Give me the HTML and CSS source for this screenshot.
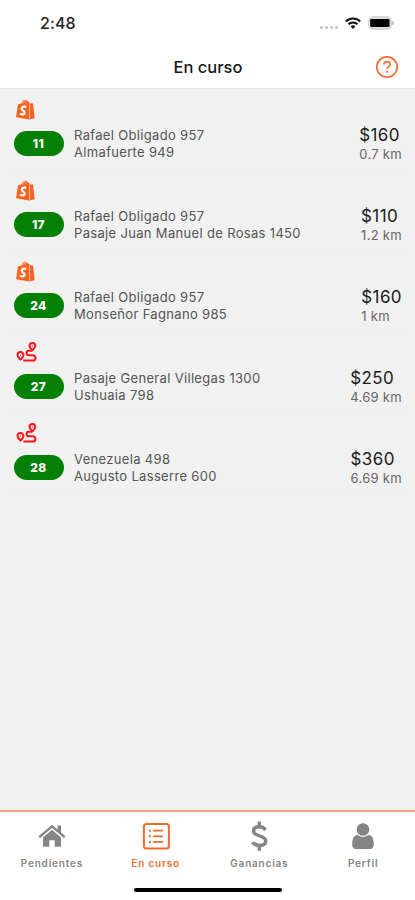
FILE: index.html
```html
<!DOCTYPE html>
<html lang="es">
<head>
<meta charset="utf-8">
<title>En curso</title>
<link rel="stylesheet" href="styles.css">
</head>
<body>
<svg class="defs" width="0" height="0" aria-hidden="true">
  <symbol id="bag" viewBox="0 0 18 20">
    <path fill="#f9621f" d="M1.8 5.3 5 4.4C5.6 2.200 7 .7 8.700.6c.6 0 1 .3 1.300.8.9 0 1.500.7 1.900 1.500l.6-.1V19.600L0 17.400z"/>
    <path fill="#f9621f" d="M12.400 2.800l1.800 1.400 2 .2L17.700 18.300l-5.300 1.300z"/>
    <path fill="none" stroke="#f4f0ed" stroke-width=".6" d="M6.200 4.300c.5-1.500 1.300-2.500 2.400-2.700M9.200 3.500c0-.8-.1-1.300-.5-1.900M12.900 3.500v15.500"/>
    <path fill="none" stroke="#fff" stroke-width="2.100" d="M9.600 7.700C7.700 6.900 5.500 7.500 5.400 9.200c-.1 1.700 3 2 2.800 4-.2 1.800-2.600 1.900-4.500.7"/>
  </symbol>
  <symbol id="route" viewBox="0 0 20 20">
    <g fill="none" stroke="#f8151b" stroke-width="2" stroke-linejoin="round">
      <path d="M15.900 8.400c-1.500-1.800-2.900-3-2.900-4.500a2.900 2.900 0 0 1 5.800 0c0 1.500-1.400 2.700-2.900 4.500z"/>
      <path d="M4 17.600c-1.600-1.800-3-3-3-4.500a3 3 0 0 1 6 0c0 1.500-1.400 2.700-3 4.500z"/>
      <path d="M15.500 8.800h-3.200a2.200 2.200 0 0 0 0 4.400h4a2.700 2.700 0 0 1 0 5.400H6.800"/>
    </g>
    <circle cx="15.900" cy="3.900" r=".7" fill="#f8151b"/><circle cx="4" cy="13.100" r=".7" fill="#f8151b"/>
  </symbol>
</svg>
<div class="screen">
  <header class="header">
    <div class="status">
      <span class="time">2:48</span>
      <div class="indicators">
        <span class="dots"><i></i><i></i><i></i><i></i></span>
        <svg class="wifi" width="16" height="12" viewBox="0 0 16 12"><g fill="none" stroke="#111" stroke-width="2.100"><path d="M.8 4.400a10.400 10.400 0 0 1 14.400 0"/><path d="M3.500 7.300a6.500 6.500 0 0 1 9 0"/></g><path fill="#111" d="M5.700 9.400a3.300 3.300 0 0 1 4.600 0L8 11.900z"/></svg>
        <svg class="battery" width="27" height="14" viewBox="0 0 27 14"><rect x=".8" y=".8" width="22.400" height="12.400" rx="3.500" fill="#dedede" stroke="#cacaca"/><rect x="2.200" y="3" width="19.300" height="8" rx="1.200" fill="#000"/><path d="M24.300 4.500q3 2.500 0 5z" fill="#aaa"/></svg>
      </div>
    </div>
    <div class="titlebar">
      <h1>En curso</h1>
      <svg class="help" width="24" height="24" viewBox="0 0 24 24" fill="none" stroke="#f96b32"><circle cx="12" cy="12" r="10.200" stroke-width="1.700"/><path stroke-width="1.600" d="M8.900 9.500C9 7.500 10.300 6.600 12 6.600s3.200 1 3.200 2.700c0 2.200-3.100 2.400-3.100 5"/><circle cx="12.100" cy="16.800" r="1.100" fill="#f96b32" stroke="none"/></svg>
    </div>
  </header>
  <main class="list">
    <article class="order">
      <svg class="kind bag"><use href="#bag"/></svg>
      <div class="row"><span class="badge">11</span><p class="address">Rafael Obligado 957<br>Almafuerte 949</p><div class="amount"><b>$160</b><span>0.7 km</span></div></div>
    </article>
    <article class="order">
      <svg class="kind bag"><use href="#bag"/></svg>
      <div class="row"><span class="badge">17</span><p class="address">Rafael Obligado 957<br>Pasaje Juan Manuel de Rosas 1450</p><div class="amount"><b>$110</b><span>1.2 km</span></div></div>
    </article>
    <article class="order">
      <svg class="kind bag"><use href="#bag"/></svg>
      <div class="row"><span class="badge">24</span><p class="address">Rafael Obligado 957<br>Monseñor Fagnano 985</p><div class="amount"><b>$160</b><span>1 km</span></div></div>
    </article>
    <article class="order">
      <svg class="kind route"><use href="#route"/></svg>
      <div class="row"><span class="badge">27</span><p class="address">Pasaje General Villegas 1300<br>Ushuaia 798</p><div class="amount"><b>$250</b><span>4.69 km</span></div></div>
    </article>
    <article class="order">
      <svg class="kind route"><use href="#route"/></svg>
      <div class="row"><span class="badge">28</span><p class="address">Venezuela 498<br>Augusto Lasserre 600</p><div class="amount"><b>$360</b><span>6.69 km</span></div></div>
    </article>
  </main>
  <footer class="footer">
    <nav class="tabs">
      <a class="tab"><svg width="28" height="32" viewBox="0 0 28 32"><path fill="#858585" d="M14 9.800 23 17.500v9.200h-6.300v-6.500h-5.400v6.500H5v-9.200z"/><path fill="none" stroke="#858585" stroke-width="2.300" d="M1.300 17.200 14 6.300l12.700 10.900"/><path fill="#858585" d="M19.500 5.500H23v8l-3.500-3z"/></svg><span>Pendientes</span></a>
      <a class="tab active"><svg width="28" height="32" viewBox="0 0 28 32"><rect x="1.900" y="4" width="25" height="24.600" rx="2.500" fill="none" stroke="#ee6b2c" stroke-width="2"/><g stroke="#ee6b2c" stroke-width="1.700"><path d="M11 10.700h10M11 16.300h10M11 21.900h10"/><path stroke-width="2" d="M6.800 10.700h2M6.800 16.300h2M6.800 21.900h2"/></g></svg><span>En curso</span></a>
      <a class="tab"><svg width="28" height="32" viewBox="0 0 28 32"><path fill="none" stroke="#858585" stroke-width="3.500" d="M20.700 9.700C18.800 7.700 16.600 6.800 14 6.800c-3.400 0-5.500 1.600-5.500 4.200 0 5.900 12.200 4 12.200 10.100 0 2.900-2.500 4.400-5.900 4.400-3 0-5.500-1-7.500-3.100M14.300 1.400v5.500M14.300 25v5.800"/></svg><span>Ganancias</span></a>
      <a class="tab"><svg width="28" height="32" viewBox="0 0 28 32"><circle cx="14" cy="9.500" r="6.300" fill="#858585"/><path fill="#858585" d="M8.600 15c3.300 2.500 7.500 2.500 10.800 0 4.100.1 5.400 4.400 5.400 9.500 0 2.800-1.300 4.500-3.800 4.500H7c-2.500 0-3.800-1.700-3.800-4.500 0-5.100 1.300-9.400 5.400-9.500z"/></svg><span>Perfil</span></a>
    </nav>
    <div class="home"></div>
  </footer>
</div>
</body>
</html>
```
FILE: styles.css
```css
* { box-sizing: border-box; }
body { margin: 0; font-family: Inter, "Liberation Sans", sans-serif; }
h1, p { margin: 0; }
.defs { display: block; height: 0; }
.screen { display: flex; flex-direction: column; width: 415px; height: 900px; background: #f1f1f1; overflow: hidden; }
.header { height: 88px; background: #fff; flex: none; }
.status { height: 46px; padding: 0 20px 0 40px; display: flex; align-items: center; justify-content: space-between; }
.time { font-size: 16px; font-weight: 500; line-height: 20px; letter-spacing: .1px; color: #222; }
.indicators { display: flex; align-items: center; }
.dots { display: flex; gap: 2px; margin: 8px 7px 0 0; }
.dots i { width: 3px; height: 3px; border-radius: 50%; background: #c2c2c2; }
.wifi { margin-right: 7px; }
.titlebar { height: 42px; display: grid; grid-template-columns: 1fr auto 1fr; align-items: center; padding-right: 16px; padding-left: 17px; }
.titlebar h1 { grid-column: 2; font-size: 16.5px; line-height: 20px; font-weight: 500; letter-spacing: 0; color: #171717; }
.help { justify-self: end; }
.list { flex: 1; padding: 1px 13px 0; border-top: 1px solid #e8e8e8; }
.order { height: 81px; padding-top: 9px; border-bottom: 1px solid #eee; }
.kind { display: block; width: 21px; height: 20px; margin-left: 3px; }
.bag { width: 19px; height: 21px; margin-bottom: -1px; }
.row { display: flex; align-items: center; margin-top: 6px; }
.badge { width: 50px; height: 25px; border-radius: 13px; background: #048004; color: #fff; font-size: 12px; font-weight: 800; line-height: 25px; letter-spacing: .4px; text-align: center; margin: -1px 0 0 .5px; }
.address { flex: 1; margin-left: 10.5px; font-size: 13px; line-height: 17px; letter-spacing: .33px; color: #555; }
.amount { display: flex; flex-direction: column; padding-top: 1px; }
.amount b { font-size: 17px; font-weight: 400; line-height: 19px; letter-spacing: .4px; color: #1b1b1b; }
.amount span { font-size: 13px; line-height: 18px; letter-spacing: .3px; color: #666; }
.footer { flex: none; height: 90px; background: #fff; border-top: 2px solid #f8a28e; }
.tabs { display: grid; grid-template-columns: repeat(4, 1fr); height: 76px; }
.tab { display: flex; flex-direction: column; align-items: center; padding-top: 8px; color: #858585; font-size: 10px; font-weight: 600; line-height: 14px; letter-spacing: .8px; }
.tab span { margin-top: 4px; }
.active { color: #f66b32; }
.home { width: 148px; height: 4px; border-radius: 2px; background: #000; margin: 0 auto; }
```
